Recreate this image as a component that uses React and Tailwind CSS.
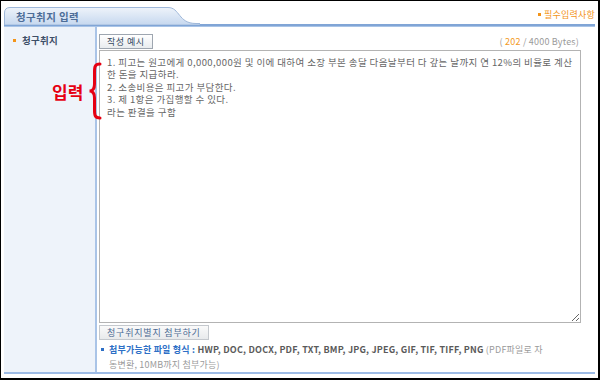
import React from "react";

// Claim purpose input panel (청구취지 입력)
const KR = "font-['Noto_Sans_CJK_KR','Noto_Sans',sans-serif]";

const CLAIM_TEXT =
  "1. 피고는 원고에게 0,000,000원 및 이에 대하여 소장 부본 송달 다음날부터 다 갚는 날까지 연 12%의 비율로 계산\n" +
  "한 돈을 지급하라.\n" +
  "2. 소송비용은 피고가 부담한다.\n" +
  "3. 제 1항은 가집행할 수 있다.\n" +
  "라는 판결을 구함";

function TabShape() {
  return (
    <svg
      className="absolute left-0 top-0"
      width="196"
      height="18"
      viewBox="0 0 196 18"
    >
      <defs>
        <linearGradient id="tabfill" x1="0" y1="0" x2="0" y2="1">
          <stop offset="0" stopColor="#eef3fa" />
          <stop offset="1" stopColor="#c6d8ef" />
        </linearGradient>
      </defs>
      <path
        d="M0.5 18 L0.5 6 Q0.5 0.5 6 0.5 L164 0.5 C176 0.5 174 16.5 192 16.5 L196 16.5 L196 18 Z"
        fill="url(#tabfill)"
        stroke="#9fb8da"
        strokeWidth="1"
      />
    </svg>
  );
}

function Brace() {
  return (
    <svg
      className="absolute left-[86px] top-[61px]"
      width="16"
      height="58"
      viewBox="0 0 16 58"
    >
      <path
        d="M13 2 C7 2 7.5 6 7.5 12 L7.5 22 C7.5 27 6 29 2.5 29 C6 29 7.5 31 7.5 36 L7.5 46 C7.5 52 7 56 13 56"
        fill="none"
        stroke="#e60012"
        strokeWidth="3"
        strokeLinecap="round"
      />
    </svg>
  );
}

export default function App() {
  return (
    <div
      className={`relative w-[600px] h-[380px] bg-white border-l border-t border-r-2 border-b-2 border-black ${KR}`}
    >
      <div className="pl-[3px] pr-[3px] pt-[6px] pb-[4px]">
        {/* header */}
        <div className="flex items-end justify-between h-[17px]">
          <div className="relative w-[196px] h-[17px]">
            <TabShape />
            <div className="relative pl-[12px] pt-[3px] text-[10.5px] leading-[13px] font-bold text-[#4d6d98] tracking-[0.4px]">
              청구취지 입력
            </div>
          </div>
          <div className="flex items-center gap-[3px] pb-[4px] text-[9px] leading-[11px] text-[#f39419] tracking-[0.2px]">
            <span className="inline-block w-[3px] h-[3px] bg-[#f39419]" />
            <span>필수입력사항</span>
          </div>
        </div>
        <div className="h-[3px] bg-[#80a5d6] border-b border-[#a9c4e7]" />

        {/* body */}
        <div className="flex h-[345px]">
          <div className="w-[93px] shrink-0 bg-[#eef3fa] border-r-2 border-[#aac4e7] pl-[9px] pt-[7px]">
            <div className="flex items-center gap-[6px] text-[9.5px] leading-[12px] font-bold text-[#3d4f68] tracking-[0.3px]">
              <span className="inline-block w-[3px] h-[3px] bg-[#f39419]" />
              <span>청구취지</span>
            </div>
          </div>

          <div className="flex-1 pl-[2px] pt-[7px] leading-[15px]">
            <div className="flex items-center justify-between w-[482px]">
              <button
                type="button"
                className="block h-[15px] px-[7px] border border-[#9ea6b0] bg-gradient-to-b from-white to-[#e9ecef] text-[9px] leading-[13px] text-[#34495f] tracking-[0.5px]"
              >
                작성 예시
              </button>
              <span className="pr-[2px] text-[9px] leading-[12px] text-[#9a9a9a] tracking-[0.2px]">
                ( <span className="text-[#f39a1e]">202</span> / 4000 Bytes)
              </span>
            </div>

            <textarea
              className="block mt-[1px] w-[482px] h-[273px] border border-[#b3b3b3] bg-white pl-[7px] pr-[4px] pt-[5px] text-[9.5px] leading-[12.4px] tracking-[0.4px] text-[#666] outline-none whitespace-pre-wrap"
              defaultValue={CLAIM_TEXT}
            />

            <button
              type="button"
              className="block mt-[2px] h-[15px] px-[7px] border border-[#c4c8cd] bg-gradient-to-b from-[#fafafa] to-[#e8eaec] text-[9px] leading-[13px] text-[#4b6a93] tracking-[0.8px]"
            >
              청구취지별지 첨부하기
            </button>

            <div className="mt-[2px] pl-[2px] text-[9px] leading-[15px] tracking-[0.2px]">
              <div className="flex items-center gap-[5px] whitespace-nowrap">
                <span className="inline-block w-[3px] h-[3px] bg-[#2d6fc6]" />
                <span>
                  <span className="font-bold text-[#2d6fc6]">
                    첨부가능한 파일 형식 :{" "}
                  </span>
                  <span className="font-bold text-[#5a5a5a]">
                    HWP, DOC, DOCX, PDF, TXT, BMP, JPG, JPEG, GIF, TIF, TIFF,
                    PNG
                  </span>{" "}
                  <span className="text-[#9a9a9a]">(PDF파일로 자</span>
                </span>
              </div>
              <div className="pl-[8px] text-[#9a9a9a]">
                동변환, 10MB까지 첨부가능)
              </div>
            </div>
          </div>
        </div>
        <div className="h-[2px] bg-[#9dbbe5]" />
      </div>

      {/* annotation */}
      <div className="absolute left-[51px] top-[79px] text-[17px] leading-[24px] font-bold text-[#e60012]">
        입력
      </div>
      <Brace />
    </div>
  );
}
